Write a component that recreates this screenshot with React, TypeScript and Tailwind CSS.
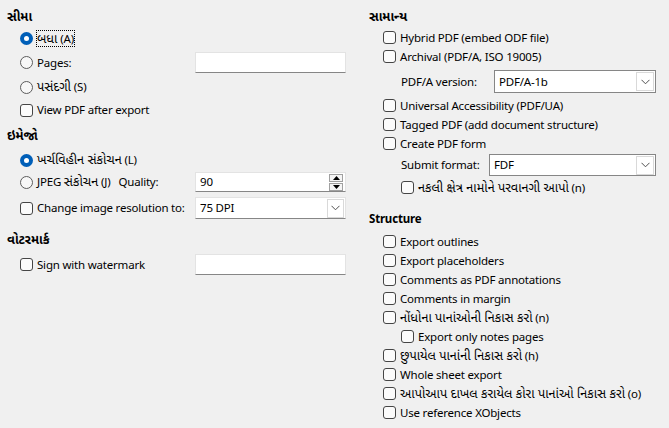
import React from "react";

const font = { fontFamily: '"Noto Sans", "Noto Sans Gujarati", "Lohit Gujarati", sans-serif' };

function Radio({ checked }: { checked?: boolean }) {
    if (checked) {
        return (
            <span className="w-[13px] h-[13px] rounded-full bg-[#005fb8] flex items-center justify-center shrink-0">
                <span className="w-[5px] h-[5px] rounded-full bg-white" />
            </span>
        );
    }
    return <span className="w-[13px] h-[13px] rounded-full border border-[#5c5c5c] bg-[#f7f7f7] shrink-0" />;
}

function Check() {
    return <span className="w-[13px] h-[13px] rounded-[3px] border border-[#454545] bg-[#fbfbfb] shrink-0" />;
}

function Chevron() {
    return (
        <svg width="9" height="6" viewBox="0 0 9 6" className="text-[#505050]">
            <path d="M0.5 0.8 L4.5 4.8 L8.5 0.8" fill="none" stroke="currentColor" strokeWidth="1" />
        </svg>
    );
}

function TextField({ value }: { value?: string }) {
    return (
        <div className="w-[151px] h-full bg-white border border-[#e3e3e3] border-b-[#868686] flex items-center pl-[4px]">
            {value}
        </div>
    );
}

function ComboEdit({ value }: { value: string }) {
    return (
        <div className="w-[151px] h-full bg-white border border-[#e3e3e3] border-b-[#868686] flex items-center justify-between pl-[4px]">
            <span>{value}</span>
            <span className="w-[17px] h-[19px] mr-[1px] border border-[#d9d9d9] flex items-center justify-center">
                <Chevron />
            </span>
        </div>
    );
}

function ListBox({ value, width }: { value: string; width: string }) {
    return (
        <div className={`${width} h-full bg-white border border-[#868686] flex items-center justify-between pl-[4px]`}>
            <span>{value}</span>
            <span className="w-[18px] h-[19px] mr-[1px] border border-[#d9d9d9] flex items-center justify-center">
                <Chevron />
            </span>
        </div>
    );
}

function Spin({ value }: { value: string }) {
    return (
        <div className="w-[151px] h-full bg-white border border-[#e3e3e3] border-b-[#868686] flex items-center justify-between pl-[4px]">
            <span>{value}</span>
            <span className="flex flex-col gap-[1px] mr-[2px]">
                <span className="w-[14px] h-[8px] border border-[#a0a0a0] bg-[#f5f5f5] flex items-center justify-center">
                    <svg width="7" height="4" viewBox="0 0 7 4"><path d="M0 4 L3.5 0 L7 4 Z" fill="#000" /></svg>
                </span>
                <span className="w-[14px] h-[8px] border border-[#a0a0a0] bg-[#f5f5f5] flex items-center justify-center">
                    <svg width="7" height="4" viewBox="0 0 7 4"><path d="M0 0 L3.5 4 L7 0 Z" fill="#000" /></svg>
                </span>
            </span>
        </div>
    );
}

function Heading({ children, className = "" }: { children: React.ReactNode; className?: string }) {
    return <div className={`h-[20px] flex items-center font-bold ${className}`}>{children}</div>;
}

// Gujarati glyphs come out small in the fallback font, so bump them up a bit
function Gu({ children }: { children: React.ReactNode }) {
    return <span className="text-[12.75px] tracking-normal">{children}</span>;
}

function CheckRow({ label, className = "" }: { label: React.ReactNode; className?: string }) {
    return (
        <div className={`h-[19px] flex items-center gap-[4px] ${className}`}>
            <Check />
            <span>{label}</span>
        </div>
    );
}

export default function App() {
    return (
        <div
            className="w-[669px] h-[428px] bg-[#f0f0f0] text-black text-[11.5px] tracking-[-0.2px] flex overflow-hidden"
            style={font}
        >
            {/* left column */}
            <div className="w-[369px] pl-[7px] pt-[7px] flex flex-col">
                <Heading><Gu>સીમા</Gu></Heading>
                <div className="h-[22px] flex items-center pl-[13px] gap-[4px]">
                    <Radio checked />
                    <span className="outline outline-1 outline-dotted outline-black leading-[15px]">
                        <Gu>બધા</Gu> (A)
                    </span>
                </div>
                <div className="mt-[3px] h-[21px] flex items-center pl-[13px]">
                    <div className="w-[175px] flex items-center gap-[4px]">
                        <Radio />
                        <span>Pages:</span>
                    </div>
                    <TextField />
                </div>
                <div className="mt-[4px] h-[20px] flex items-center pl-[13px] gap-[4px]">
                    <Radio />
                    <span><Gu>પસંદગી</Gu> (S)</span>
                </div>
                <div className="mt-[3px] h-[20px] flex items-center pl-[13px] gap-[4px]">
                    <Check />
                    <span>View PDF after export</span>
                </div>

                <Heading className="mt-[6px]"><Gu>ઇમેજો</Gu></Heading>
                <div className="mt-[3px] h-[22px] flex items-center pl-[13px] gap-[4px]">
                    <Radio checked />
                    <span><Gu>ખર્ચવિહીન સંકોચન</Gu> (L)</span>
                </div>
                <div className="mt-[1px] h-[20px] flex items-center pl-[13px]">
                    <div className="w-[175px] flex items-center gap-[4px]">
                        <Radio />
                        <span>JPEG <Gu>સંકોચન</Gu> (J)</span>
                        <span className="ml-[4px]">Quality:</span>
                    </div>
                    <Spin value="90" />
                </div>
                <div className="mt-[5px] h-[22px] flex items-center pl-[13px]">
                    <div className="w-[175px] flex items-center gap-[4px] whitespace-nowrap">
                        <Check />
                        <span>Change image resolution to:</span>
                    </div>
                    <ComboEdit value="75 DPI" />
                </div>

                <Heading className="mt-[11px]"><Gu>વોટરમાર્ક</Gu></Heading>
                <div className="mt-[4px] h-[21px] flex items-center pl-[13px]">
                    <div className="w-[175px] flex items-center gap-[4px]">
                        <Check />
                        <span>Sign with watermark</span>
                    </div>
                    <TextField />
                </div>
            </div>

            {/* right column */}
            <div className="flex-1 pt-[7px] flex flex-col whitespace-nowrap">
                <Heading><Gu>સામાન્ય</Gu></Heading>
                <div className="pl-[14px] flex flex-col">
                    <CheckRow label="Hybrid PDF (embed ODF file)" className="mt-[1px]" />
                    <CheckRow label="Archival (PDF/A, ISO 19005)" />
                    <div className="mt-[4px] h-[23px] flex items-center pl-[18px]">
                        <span className="w-[93px]">PDF/A version:</span>
                        <ListBox value="PDF/A-1b" width="w-[162px]" />
                    </div>
                    <CheckRow label="Universal Accessibility (PDF/UA)" className="mt-[3px]" />
                    <CheckRow label="Tagged PDF (add document structure)" />
                    <CheckRow label="Create PDF form" />
                    <div className="mt-[1px] h-[22px] flex items-center pl-[18px]">
                        <span className="w-[88px]">Submit format:</span>
                        <ListBox value="FDF" width="w-[167px]" />
                    </div>
                    <CheckRow
                        label={<><Gu>નકલી ક્ષેત્ર નામોને પરવાનગી આપો</Gu> (n)</>}
                        className="mt-[2px] pl-[18px]"
                    />
                </div>

                <Heading className="mt-[12px]">Structure</Heading>
                <div className="pl-[14px] mt-[3px] flex flex-col">
                    <CheckRow label="Export outlines" />
                    <CheckRow label="Export placeholders" />
                    <CheckRow label="Comments as PDF annotations" />
                    <CheckRow label="Comments in margin" />
                    <CheckRow label={<><Gu>નોંધોના પાનાંઓની નિકાસ કરો</Gu> (n)</>} />
                    <CheckRow label="Export only notes pages" className="pl-[18px]" />
                    <CheckRow label={<><Gu>છુપાયેલ પાનાંની નિકાસ કરો</Gu> (h)</>} />
                    <CheckRow label="Whole sheet export" />
                    <CheckRow label={<><Gu>આપોઆપ દાખલ કરાયેલ કોરા પાનાંઓ નિકાસ કરો</Gu> (o)</>} />
                    <CheckRow label="Use reference XObjects" />
                </div>
            </div>
        </div>
    );
}
